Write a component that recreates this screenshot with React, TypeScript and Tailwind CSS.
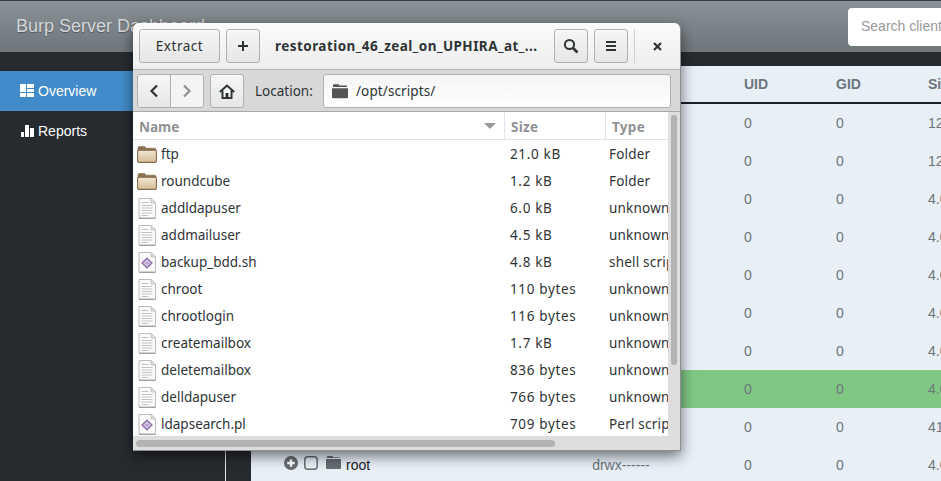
import React from "react";

const Btn = ({ className = "", children }: { className?: string; children: React.ReactNode }) => (
  <div className={`flex items-center justify-center h-[34px] rounded-[3px] border border-[#b0b0b0] bg-gradient-to-b from-[#f6f6f6] to-[#e6e6e6] text-[#2e3436] shadow-[inset_0_1px_0_#fff] ${className}`}>
    {children}
  </div>
);

const Folder = () => (
  <svg width="20" height="17" viewBox="0 0 20 17" className="shrink-0">
    <defs>
      <linearGradient id="folderBody" x1="0" y1="0" x2="0" y2="1">
        <stop offset="0" stopColor="#f1e6d2" />
        <stop offset="1" stopColor="#d6bd96" />
      </linearGradient>
    </defs>
    <path d="M1 5V2C1 1 1.6.5 2.4.5H7.5L9 2.2h8.4c.9 0 1.6.6 1.6 1.5V5z" fill="#8c7250" stroke="#7d6444" strokeWidth=".6" />
    <rect x="0.6" y="4.2" width="18.8" height="12.2" rx="1.4" fill="url(#folderBody)" stroke="#86694a" strokeWidth="1.1" />
  </svg>
);

const TextFile = () => (
  <svg width="20" height="21" viewBox="0 0 20 21" className="shrink-0">
    <path d="M2 .5h12l4.5 4.5v15H2z" fill="#fbfbfb" stroke="#bcbcb8" strokeWidth="1" />
    <path d="M14 .5V5h4.5z" fill="#e2e2de" stroke="#bcbcb8" strokeWidth=".8" />
    <path d="M4.5 4.5h7M4.5 7.5h11M4.5 10h11M4.5 12.5h11M4.5 15h11M4.5 17.5h7" stroke="#c2c2c2" strokeWidth="1" />
    <path d="M2 20.4h16.5" stroke="#9a9a96" strokeWidth="1" />
  </svg>
);

const ScriptFile = () => (
  <svg width="20" height="21" viewBox="0 0 20 21" className="shrink-0">
    <path d="M2 .5h12l4.5 4.5v15H2z" fill="#fbfbfb" stroke="#bcbcb8" strokeWidth="1" />
    <path d="M14 .5V5h4.5z" fill="#e2e2de" stroke="#bcbcb8" strokeWidth=".8" />
    <path d="M10 6.2l5 4.8-5 4.8L5 11z" fill="#d5c3e2" stroke="#8e6fa8" strokeWidth="1.3" />
    <path d="M8.3 11h3.4" stroke="#a58abb" strokeWidth="1.2" />
    <path d="M2 20.4h16.5" stroke="#9a9a96" strokeWidth="1" />
  </svg>
);

const files: [string, string, string, "folder" | "text" | "script"][] = [
  ["ftp", "21.0 kB", "Folder", "folder"],
  ["roundcube", "1.2 kB", "Folder", "folder"],
  ["addldapuser", "6.0 kB", "unknown", "text"],
  ["addmailuser", "4.5 kB", "unknown", "text"],
  ["backup_bdd.sh", "4.8 kB", "shell script", "script"],
  ["chroot", "110 bytes", "unknown", "text"],
  ["chrootlogin", "116 bytes", "unknown", "text"],
  ["createmailbox", "1.7 kB", "unknown", "text"],
  ["deletemailbox", "836 bytes", "unknown", "text"],
  ["delldapuser", "766 bytes", "unknown", "text"],
  ["ldapsearch.pl", "709 bytes", "Perl script", "script"],
];

const rows = ["12.0 KiB", "12.0 KiB", "4.0 KiB", "4.0 KiB", "4.0 KiB", "4.0 KiB", "4.0 KiB", "4.0 KiB", "41.0 KiB", "4.0 KiB"];

export default function App() {
  return (
    <div className="relative w-[941px] h-[481px] overflow-hidden bg-[#272b30] font-['Liberation_Sans',sans-serif]">
      {/* page navbar */}
      <div className="flex items-center justify-between h-[52px] border-t border-t-[#3a3f44] bg-gradient-to-b from-[#8a9196] to-[#6f777b]">
        <div className="pl-4 text-[18px] text-[#d5d8da] [text-shadow:0_1px_1px_rgba(0,0,0,0.35)]">Burp Server Dashboard</div>
        <div className="flex items-center w-[120px] h-[38px] mr-[-27px] rounded-l-[4px] bg-white pl-[13px] text-[14px] text-[#999] whitespace-nowrap overflow-hidden">
          Search clients
        </div>
      </div>

      <div className="flex">
        {/* sidebar */}
        <div className="w-[225px] h-[429px] pt-[19px] shrink-0">
          <div className="flex items-center h-[40px] pl-5 gap-[4px] bg-[#428bca] text-[14px] text-white">
            <svg width="14" height="14" viewBox="0 0 14 14" fill="#fff"><path d="M0 0h6v8H0zM7 0h7v4H7zM7 5h7v3H7zM0 9h6v4H0zM7 9h7v4H7z" /></svg>
            Overview
          </div>
          <div className="flex items-center h-[40px] pl-[21px] gap-[3px] text-[14px] text-white">
            <svg width="14" height="14" viewBox="0 0 14 14" fill="#fff"><path d="M0 8h3v5H0zM4 1h4v12H4zM9 4h4v9H9z" /></svg>
            Reports
          </div>
        </div>
        <div className="w-px h-[429px] bg-[#e8e8e8] shrink-0" />
        <div className="w-[25px] shrink-0" />

        {/* main */}
        <div className="flex-1 mt-[14px] bg-[#e8eff7] overflow-hidden text-[14px] text-[#6d757c]">
          <div className="grid grid-cols-[493px_92px_92px_100px] h-[38px] items-center border-b-2 border-b-[#1d2024] font-bold">
            <div />
            <div>UID</div>
            <div>GID</div>
            <div>Size</div>
          </div>
          {rows.map((size, i) => (
            <div key={i} className={`grid grid-cols-[493px_92px_92px_100px] h-[38px] items-center whitespace-nowrap ${i === 7 ? "bg-[#81c784]" : ""}`}>
              {i === 9 ? (
                <div className="flex items-center pl-[33px] h-full">
                  <svg width="14" height="14" viewBox="0 0 14 14" className="mr-[6px] mt-[-5px]"><circle cx="7" cy="7" r="7" fill="#666c72" /><path d="M7 3.2v7.6M3.2 7h7.6" stroke="#fff" strokeWidth="2.4" /></svg>
                  <svg width="14" height="14" viewBox="0 0 14 14" className="mr-[8px] mt-[-5px]"><rect x=".8" y=".8" width="12.4" height="12.4" rx="3" fill="none" stroke="#666c72" strokeWidth="1.5" /></svg>
                  <svg width="15" height="13" viewBox="0 0 15 13" className="mr-[5px] mt-[-5px]" fill="#666c72"><path d="M1 2V1.2C1 .5 1.5 0 2 0h4c.5 0 1 .5 1 1.2H13c.6 0 1 .4 1 .8zM0 3h15v9c0 .6-.4 1-1 1H1c-.6 0-1-.4-1-1z" /></svg>
                  <span className="text-[#17191c]">root</span>
                  <span className="ml-[222px]">drwx------</span>
                </div>
              ) : (
                <div />
              )}
              <div>0</div>
              <div>0</div>
              <div>{size}</div>
            </div>
          ))}
        </div>
      </div>

      {/* archive manager window */}
      <div className="absolute left-[133px] top-[23px] w-[548px] h-[428px] flex flex-col rounded-t-[6px] border-b border-r border-[#8f8f8f] bg-[#dedede] shadow-[0_5px_14px_rgba(0,0,0,0.55)] text-[#2e3436] font-['Noto_Sans',sans-serif] text-[13.5px] overflow-hidden">
        <div className="flex items-center h-[47px] shrink-0 pl-[6px] rounded-t-[6px] border-b border-[#b4b4b4] bg-gradient-to-b from-[#fbfbfb] to-[#ededed]">
          <Btn className="w-[81px] tracking-[0.5px]">Extract</Btn>
          <Btn className="w-[34px] ml-[6px] shrink-0">
            <svg width="12" height="12" viewBox="0 0 12 12"><path d="M6 1v10M1 6h10" stroke="#2e3436" strokeWidth="2" /></svg>
          </Btn>
          <div className="flex-1 min-w-0 ml-[15px] font-bold whitespace-nowrap overflow-hidden tracking-[0.45px]">restoration_46_zeal_on_UPHIRA_at_...</div>
          <Btn className="w-[34px] ml-[12px] shrink-0">
            <svg width="16" height="16" viewBox="0 0 16 16" fill="none" stroke="#2e3436" strokeWidth="2"><circle cx="6.5" cy="6.5" r="4.6" /><path d="M10 10l4.5 4.5" strokeWidth="2.6" /></svg>
          </Btn>
          <Btn className="w-[34px] ml-[6px] shrink-0">
            <svg width="12" height="12" viewBox="0 0 12 12"><path d="M1 2h10M1 6h10M1 10h10" stroke="#2e3436" strokeWidth="2" /></svg>
          </Btn>
          <div className="w-px h-[34px] ml-[6px] bg-[#d0d0d0] shrink-0" />
          <div className="w-[45px] flex justify-center shrink-0">
            <svg width="9" height="9" viewBox="0 0 9 9"><path d="M1 1l7 7M8 1L1 8" stroke="#2e3436" strokeWidth="2.2" /></svg>
          </div>
        </div>

        <div className="flex items-center h-[41px] shrink-0 pl-[4px] pr-[9px] pt-px bg-[#d8d8d8]">
          <div className="flex h-[34px] w-[67px] rounded-[3px] border border-[#b0b0b0] overflow-hidden">
            <div className="flex-1 flex items-center justify-center border-r border-[#b0b0b0] bg-gradient-to-b from-[#f6f6f6] to-[#e6e6e6]">
              <svg width="10" height="14" viewBox="0 0 10 14" fill="none" stroke="#2e3436" strokeWidth="2.2"><path d="M8 1.5L2.5 7 8 12.5" /></svg>
            </div>
            <div className="flex-1 flex items-center justify-center bg-[#f4f4f4]">
              <svg width="10" height="14" viewBox="0 0 10 14" fill="none" stroke="#8f9193" strokeWidth="2.2"><path d="M2 1.5L7.5 7 2 12.5" /></svg>
            </div>
          </div>
          <Btn className="w-[34px] ml-[6px]">
            <svg width="16" height="15" viewBox="0 0 16 15"><path d="M3.5 6.5V14h9V6.5" fill="#fff" stroke="#2e3436" strokeWidth="2" /><path d="M.8 8L8 1.5 15.2 8" fill="none" stroke="#2e3436" strokeWidth="2" /><rect x="6.5" y="9" width="3" height="5" fill="#2e3436" /></svg>
          </Btn>
          <div className="ml-[11px] w-[68px] pt-px">Location:</div>
          <div className="flex items-center flex-1 h-[34px] rounded-[3px] border border-[#b0b0b0] bg-gradient-to-b from-[#f4f4f4] to-white pl-[8px] pt-px">
            <svg width="16" height="15" viewBox="0 0 16 15" fill="#555" className="mr-[8px]"><path d="M1 3V1.5C1 .7 1.5 .3 2 .3h4.2c.5 0 1 .5 1 1.2H14c.6 0 1 .4 1 1V3zM0 4.2h16V13c0 .7-.5 1.2-1 1.2H1c-.6 0-1-.5-1-1.2z" /></svg>
            <span className="tracking-[0.1px]">/opt/scripts/</span>
          </div>
        </div>

        <div className="flex flex-1 min-h-0 border-t border-[#a9a9a9]">
          <div className="w-[535px] bg-white overflow-hidden">
            <div className="flex h-[28px] text-[#8f9193] font-bold border-b border-[#e4e4e4]">
              <div className="relative w-[372px] pl-[6px] pt-[4px] flex items-center border-r border-[#e4e4e4]">
                Name
                <div className="absolute right-[8px] top-[11px] w-0 h-0 border-x-[6px] border-x-transparent border-t-[6px] border-t-[#9a9a9a]" />
              </div>
              <div className="w-[101px] pl-[6px] pt-[4px] flex items-center border-r border-[#e4e4e4] tracking-[0.3px]">Size</div>
              <div className="flex-1 pl-[6px] pt-[4px] flex items-center tracking-[0.3px]">Type</div>
            </div>
            <div className="pt-px">
              {files.map(([name, size, type, kind]) => (
                <div key={name} className="flex items-center h-[27px] whitespace-nowrap">
                  <div className="flex items-center w-[371px] pl-[3px] gap-[4px]">
                    <div className="w-[21px] flex justify-center">
                      {kind === "folder" ? <Folder /> : kind === "text" ? <TextFile /> : <ScriptFile />}
                    </div>
                    {name}
                  </div>
                  <div className="w-[105px] pl-[6px] tracking-[0.65px]">{size}</div>
                  <div className="flex-1 overflow-hidden tracking-[0.2px]">{type}</div>
                </div>
              ))}
            </div>
          </div>
          <div className="flex-1 pt-[3px] pl-[3px]">
            <div className="w-[6px] h-[250px] rounded-full bg-[#b3b3b3]" />
          </div>
        </div>

        <div className="h-[14px] shrink-0 pl-[3px] pt-[4px] bg-[#dedede]">
          <div className="w-[419px] h-[7px] rounded-full bg-[#b3b3b3]" />
        </div>
      </div>
    </div>
  );
}
